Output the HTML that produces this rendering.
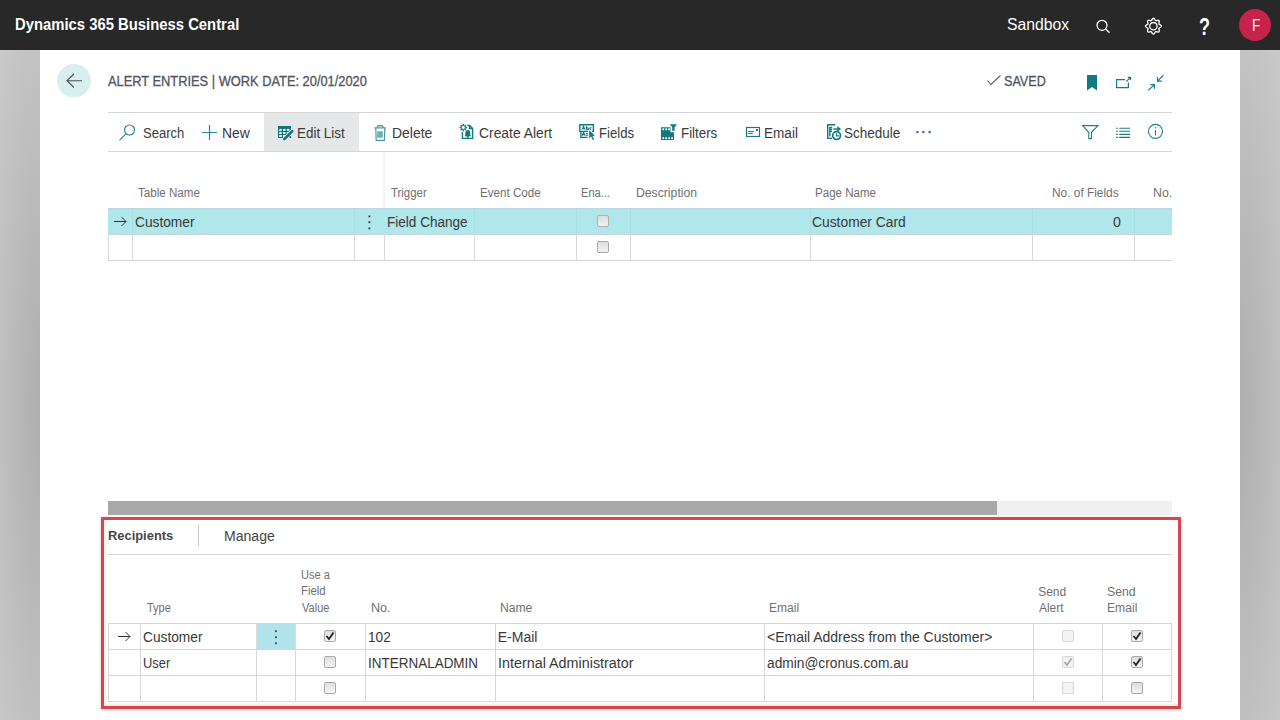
<!DOCTYPE html>
<html><head><meta charset="utf-8">
<style>
*{box-sizing:border-box;margin:0;padding:0}
html,body{width:1280px;height:720px;overflow:hidden;background:#fff;font-family:"Liberation Sans",sans-serif;color:#333}
#top{position:absolute;left:0;top:0;width:1280px;height:50px;background:#282828}
#lband{position:absolute;left:0;top:50px;width:40px;height:670px;background:radial-gradient(ellipse 120px 935px at 100% 360px,#aeaeae 0%,#e4e4e4 100%)}
#rband{position:absolute;left:1240px;top:50px;width:40px;height:670px;background:radial-gradient(ellipse 120px 935px at 0% 360px,#aeaeae 0%,#e4e4e4 100%)}
.t{position:absolute;white-space:nowrap;line-height:1;transform-origin:0 0}
.hl{position:absolute;height:1px;background:#d6d6d6}
.vl{position:absolute;width:1px;background:#d9d9d9}
.act{font-size:14px;color:#363636}
.hdr{font-size:12px;color:#6b6b6b}
.cell{font-size:14px;color:#262626}
svg{position:absolute;overflow:visible}
.cb{position:absolute;width:12px;height:12px;border:1px solid #a9a9a9;border-radius:2px;background:linear-gradient(#dedede,#f4f4f4)}
.cbd{position:absolute;width:12px;height:12px;border:1px solid #d6d6d6;border-radius:2px;background:#f4f4f4}
</style></head><body>
<!-- top bar -->
<div id="top"></div>
<svg style="left:0;top:0" width="1280" height="50">
  <circle cx="1102" cy="25.3" r="5" fill="none" stroke="#fff" stroke-width="1.3"/>
  <line x1="1105.6" y1="28.9" x2="1109.5" y2="32.8" stroke="#fff" stroke-width="1.4"/>
  <circle cx="1153.4" cy="26.2" r="3.7" fill="none" stroke="#fff" stroke-width="1.3"/>
  <circle cx="1205" cy="24.5" r="0" fill="#fff"/>
  <circle cx="1255" cy="25" r="16" fill="#c5234a"/>
</svg>
<div class="t" style="left:1198.5px;top:14.5px;font-size:24px;font-weight:bold;color:#fff;transform:scaleX(0.75)">?</div>
<div class="t" style="left:1251.5px;top:17.5px;font-size:16px;color:#fff;transform:scaleX(0.85)">F</div>

<div id="lband"></div><div id="rband"></div>

<!-- header -->
<svg style="left:0;top:0" width="1280" height="110">
  <circle cx="74" cy="80.7" r="16.8" fill="#d9eeee"/>
</svg>

<!-- action bar -->
<div class="hl" style="left:108px;top:112px;width:1064px"></div>
<div class="hl" style="left:108px;top:151px;width:1064px"></div>
<div style="position:absolute;left:264px;top:113px;width:95px;height:38px;background:#e6e7e8"></div>

<!-- main grid -->

<div style="position:absolute;left:108px;top:208px;width:1064px;height:27px;background:#afe7ea;border-top:1px solid #bcd9e2;border-bottom:1px solid #c3d6db"></div>
<div class="vl" style="left:132px;top:209px;height:25px;background:#a8dde2"></div><div class="vl" style="left:354px;top:209px;height:25px;background:#a8dde2"></div><div class="vl" style="left:474px;top:209px;height:25px;background:#a8dde2"></div><div class="vl" style="left:576px;top:209px;height:25px;background:#a8dde2"></div><div class="vl" style="left:630px;top:209px;height:25px;background:#a8dde2"></div><div class="vl" style="left:810px;top:209px;height:25px;background:#a8dde2"></div><div class="vl" style="left:1032px;top:209px;height:25px;background:#a8dde2"></div><div class="vl" style="left:1134px;top:209px;height:25px;background:#a8dde2"></div>
<div class="hl" style="left:108px;top:260px;width:1064px"></div>
<div class="vl" style="left:108px;top:234px;height:26px"></div>
<div class="vl" style="left:132px;top:234px;height:26px"></div>
<div class="vl" style="left:354px;top:234px;height:26px"></div>
<div class="vl" style="left:382px;top:152px;height:56px;width:3px;background:linear-gradient(to right,#fdfdfd,#f1f1f1)"></div>
<div class="vl" style="left:384px;top:234px;height:26px"></div>
<div class="vl" style="left:474px;top:234px;height:26px"></div>
<div class="vl" style="left:576px;top:234px;height:26px"></div>
<div class="vl" style="left:630px;top:234px;height:26px"></div>
<div class="vl" style="left:810px;top:234px;height:26px"></div>
<div class="vl" style="left:1032px;top:234px;height:26px"></div>
<div class="vl" style="left:1134px;top:234px;height:26px"></div>

<div class="cbd" style="left:597px;top:215px;border-color:#b0b0b0;background:linear-gradient(#dcdcdc,#f2f2f2)"></div>
<div class="cb" style="left:597px;top:241px"></div>

<!-- scrollbar -->
<div style="position:absolute;left:108px;top:501px;width:1064px;height:14px;background:#f0f0f0"></div>
<div style="position:absolute;left:108px;top:501px;width:889px;height:14px;background:#a8a8a8"></div>

<!-- recipients -->
<div style="position:absolute;left:101px;top:517px;width:1080px;height:192px;border:3px solid #d6474d;box-shadow:0 1px 3px rgba(150,60,60,0.3),inset 2px -2px 2px rgba(0,0,0,0.07)"></div>
<div class="vl" style="left:198px;top:524px;height:22px;background:#c8c8c8"></div>
<div class="hl" style="left:108px;top:554px;width:1064px"></div>



<!-- recipients grid -->
<div style="position:absolute;left:256px;top:623px;width:39px;height:26px;background:#b1e4ea"></div>
<div class="hl" style="left:108px;top:623px;width:1064px"></div>
<div class="hl" style="left:108px;top:649px;width:1064px"></div>
<div class="hl" style="left:108px;top:675px;width:1064px"></div>
<div class="hl" style="left:108px;top:701px;width:1064px"></div>
<div class="vl" style="left:108px;top:623px;height:79px"></div>
<div class="vl" style="left:140px;top:623px;height:79px"></div>
<div class="vl" style="left:256px;top:623px;height:79px"></div>
<div class="vl" style="left:295px;top:623px;height:79px"></div>
<div class="vl" style="left:365px;top:623px;height:79px"></div>
<div class="vl" style="left:495px;top:623px;height:79px"></div>
<div class="vl" style="left:764px;top:623px;height:79px"></div>
<div class="vl" style="left:1033px;top:623px;height:79px"></div>
<div class="vl" style="left:1102px;top:623px;height:79px"></div>
<div class="vl" style="left:1171px;top:623px;height:79px"></div>


<div class="cb" style="left:324px;top:630px"></div>
<div class="cb" style="left:324px;top:656px"></div>
<div class="cb" style="left:324px;top:682px"></div>
<div class="cbd" style="left:1062px;top:630px"></div>
<div class="cbd" style="left:1062px;top:656px"></div>
<div class="cbd" style="left:1062px;top:682px"></div>
<div class="cb" style="left:1131px;top:630px"></div>
<div class="cb" style="left:1131px;top:656px"></div>
<div class="cb" style="left:1131px;top:682px"></div>

<!-- texts -->
<div class="t" style="left:14.57px;top:17.00px;font-size:16px;font-weight:bold;color:#fff;transform:scaleX(0.9271)">Dynamics 365 Business Central</div>
<div class="t" style="left:1007.42px;top:17.00px;font-size:16px;font-weight:normal;color:#fff;transform:scaleX(0.9839)">Sandbox</div>
<div class="t" style="left:108.30px;top:74.00px;font-size:14px;font-weight:normal;color:#51565d;transform:scaleX(0.9174);-webkit-text-stroke:0.3px #51565d">ALERT ENTRIES | WORK DATE: 20/01/2020</div>
<div class="t" style="left:1003.60px;top:73.60px;font-size:14px;font-weight:normal;color:#51565d;transform:scaleX(0.9000);-webkit-text-stroke:0.3px #51565d">SAVED</div>
<div class="t" style="left:142.77px;top:126.00px;font-size:14px;font-weight:normal;color:#3a3a3a;transform:scaleX(0.9302)">Search</div>
<div class="t" style="left:222.01px;top:126.00px;font-size:14px;font-weight:normal;color:#3a3a3a;transform:scaleX(0.9926)">New</div>
<div class="t" style="left:296.74px;top:126.00px;font-size:14px;font-weight:normal;color:#3a3a3a;transform:scaleX(0.9592)">Edit List</div>
<div class="t" style="left:391.90px;top:126.00px;font-size:14px;font-weight:normal;color:#3a3a3a;transform:scaleX(0.9974)">Delete</div>
<div class="t" style="left:478.61px;top:126.00px;font-size:14px;font-weight:normal;color:#3a3a3a;transform:scaleX(0.9904)">Create Alert</div>
<div class="t" style="left:599.16px;top:126.00px;font-size:14px;font-weight:normal;color:#3a3a3a;transform:scaleX(0.9389)">Fields</div>
<div class="t" style="left:681.15px;top:126.00px;font-size:14px;font-weight:normal;color:#3a3a3a;transform:scaleX(0.9514)">Filters</div>
<div class="t" style="left:764.03px;top:126.00px;font-size:14px;font-weight:normal;color:#3a3a3a;transform:scaleX(0.9697)">Email</div>
<div class="t" style="left:844.24px;top:126.00px;font-size:14px;font-weight:normal;color:#3a3a3a;transform:scaleX(0.9632)">Schedule</div>
<div class="t" style="left:138.20px;top:186.90px;font-size:12px;font-weight:normal;color:#707070;transform:scaleX(0.9656)">Table Name</div>
<div class="t" style="left:390.50px;top:186.90px;font-size:12px;font-weight:normal;color:#707070;transform:scaleX(0.9500)">Trigger</div>
<div class="t" style="left:479.63px;top:186.90px;font-size:12px;font-weight:normal;color:#707070;transform:scaleX(0.9689)">Event Code</div>
<div class="t" style="left:581.47px;top:186.90px;font-size:12px;font-weight:normal;color:#707070;transform:scaleX(0.9276)">Ena...</div>
<div class="t" style="left:635.58px;top:186.90px;font-size:12px;font-weight:normal;color:#707070;transform:scaleX(1.0172)">Description</div>
<div class="t" style="left:815.44px;top:186.90px;font-size:12px;font-weight:normal;color:#707070;transform:scaleX(0.9629)">Page Name</div>
<div class="t" style="left:1051.61px;top:186.90px;font-size:12px;font-weight:normal;color:#707070;transform:scaleX(0.9894)">No. of Fields</div>
<div class="t" style="left:1152.57px;top:186.90px;font-size:12px;font-weight:normal;color:#707070;transform:scaleX(1.0294)">No.</div>
<div class="t" style="left:134.62px;top:214.90px;font-size:14px;font-weight:normal;color:#383838;transform:scaleX(0.9800)">Customer</div>
<div class="t" style="left:386.73px;top:214.90px;font-size:14px;font-weight:normal;color:#383838;transform:scaleX(0.9683)">Field Change</div>
<div class="t" style="left:812.31px;top:214.90px;font-size:14px;font-weight:normal;color:#383838;transform:scaleX(0.9882)">Customer Card</div>
<div class="t" style="left:1112.80px;top:214.90px;font-size:14px;font-weight:normal;color:#383838;transform:scaleX(1.0143)">0</div>
<div class="t" style="left:107.51px;top:529.00px;font-size:13px;font-weight:bold;color:#474747;transform:scaleX(0.9922)">Recipients</div>
<div class="t" style="left:224.40px;top:529.00px;font-size:14px;font-weight:normal;color:#444;transform:scaleX(1.0041)">Manage</div>
<div class="t" style="left:146.50px;top:601.80px;font-size:12px;font-weight:normal;color:#707070;transform:scaleX(0.9154)">Type</div>
<div class="t" style="left:300.88px;top:569.00px;font-size:12px;font-weight:normal;color:#707070;transform:scaleX(0.9200)">Use a</div>
<div class="t" style="left:300.85px;top:585.40px;font-size:12px;font-weight:normal;color:#707070;transform:scaleX(0.9458)">Field</div>
<div class="t" style="left:301.80px;top:601.80px;font-size:12px;font-weight:normal;color:#707070;transform:scaleX(0.9200)">Value</div>
<div class="t" style="left:370.55px;top:601.80px;font-size:12px;font-weight:normal;color:#707070;transform:scaleX(1.0471)">No.</div>
<div class="t" style="left:500.24px;top:601.80px;font-size:12px;font-weight:normal;color:#707070;transform:scaleX(1.0081)">Name</div>
<div class="t" style="left:769.30px;top:601.80px;font-size:12px;font-weight:normal;color:#707070;transform:scaleX(1.0036)">Email</div>
<div class="t" style="left:1038.20px;top:586.00px;font-size:12px;font-weight:normal;color:#707070;transform:scaleX(1.0000)">Send</div>
<div class="t" style="left:1039.20px;top:601.60px;font-size:12px;font-weight:normal;color:#707070;transform:scaleX(0.9920)">Alert</div>
<div class="t" style="left:1106.98px;top:586.00px;font-size:12px;font-weight:normal;color:#707070;transform:scaleX(1.0192)">Send</div>
<div class="t" style="left:1106.99px;top:601.60px;font-size:12px;font-weight:normal;color:#707070;transform:scaleX(1.0107)">Email</div>
<div class="t" style="left:142.62px;top:630.20px;font-size:14px;font-weight:normal;color:#383838;transform:scaleX(0.9800)">Customer</div>
<div class="t" style="left:367.63px;top:630.20px;font-size:14px;font-weight:normal;color:#383838;transform:scaleX(0.9727)">102</div>
<div class="t" style="left:497.75px;top:630.20px;font-size:14px;font-weight:normal;color:#383838;transform:scaleX(1.0000)">E-Mail</div>
<div class="t" style="left:767.40px;top:630.20px;font-size:14px;font-weight:normal;color:#383838;transform:scaleX(0.9987)">&lt;Email Address from the Customer&gt;</div>
<div class="t" style="left:142.68px;top:656.20px;font-size:14px;font-weight:normal;color:#383838;transform:scaleX(0.9207)">User</div>
<div class="t" style="left:367.64px;top:656.20px;font-size:14px;font-weight:normal;color:#383838;transform:scaleX(0.9625)">INTERNALADMIN</div>
<div class="t" style="left:497.73px;top:656.20px;font-size:14px;font-weight:normal;color:#383838;transform:scaleX(1.0248)">Internal Administrator</div>
<div class="t" style="left:766.52px;top:656.20px;font-size:14px;font-weight:normal;color:#383838;transform:scaleX(0.9811)">admin@cronus.com.au</div>
<!-- icons -->
<svg style="left:0;top:0" width="1280" height="720" viewBox="0 0 1280 720">
  <!-- top gear -->
  <g transform="translate(1153.4,26.2)"><path d="M7.85,0.00 L7.80,0.31 L7.64,0.60 L7.41,0.88 L7.11,1.13 L6.77,1.35 L6.42,1.54 L6.10,1.72 L5.83,1.89 L5.63,2.08 L5.50,2.28 L5.45,2.51 L5.46,2.78 L5.53,3.10 L5.63,3.45 L5.74,3.83 L5.82,4.23 L5.86,4.62 L5.83,4.98 L5.73,5.30 L5.55,5.55 L5.30,5.73 L4.98,5.83 L4.62,5.86 L4.23,5.82 L3.83,5.74 L3.45,5.63 L3.10,5.53 L2.78,5.46 L2.51,5.45 L2.28,5.50 L2.08,5.63 L1.89,5.83 L1.72,6.10 L1.54,6.42 L1.35,6.77 L1.13,7.11 L0.88,7.41 L0.60,7.64 L0.31,7.80 L0.00,7.85 L-0.31,7.80 L-0.60,7.64 L-0.88,7.41 L-1.13,7.11 L-1.35,6.77 L-1.54,6.42 L-1.72,6.10 L-1.89,5.83 L-2.08,5.63 L-2.28,5.50 L-2.51,5.45 L-2.78,5.46 L-3.10,5.53 L-3.45,5.63 L-3.83,5.74 L-4.23,5.82 L-4.62,5.86 L-4.98,5.83 L-5.30,5.73 L-5.55,5.55 L-5.73,5.30 L-5.83,4.98 L-5.86,4.62 L-5.82,4.23 L-5.74,3.83 L-5.63,3.45 L-5.53,3.10 L-5.46,2.78 L-5.45,2.51 L-5.50,2.28 L-5.63,2.08 L-5.83,1.89 L-6.10,1.72 L-6.42,1.54 L-6.77,1.35 L-7.11,1.13 L-7.41,0.88 L-7.64,0.60 L-7.80,0.31 L-7.85,0.00 L-7.80,-0.31 L-7.64,-0.60 L-7.41,-0.88 L-7.11,-1.13 L-6.77,-1.35 L-6.42,-1.54 L-6.10,-1.72 L-5.83,-1.89 L-5.63,-2.08 L-5.50,-2.28 L-5.45,-2.51 L-5.46,-2.78 L-5.53,-3.10 L-5.63,-3.45 L-5.74,-3.83 L-5.82,-4.23 L-5.86,-4.62 L-5.83,-4.98 L-5.73,-5.30 L-5.55,-5.55 L-5.30,-5.73 L-4.98,-5.83 L-4.62,-5.86 L-4.23,-5.82 L-3.83,-5.74 L-3.45,-5.63 L-3.10,-5.53 L-2.78,-5.46 L-2.51,-5.45 L-2.28,-5.50 L-2.08,-5.63 L-1.89,-5.83 L-1.72,-6.10 L-1.54,-6.42 L-1.35,-6.77 L-1.13,-7.11 L-0.88,-7.41 L-0.60,-7.64 L-0.31,-7.80 L-0.00,-7.85 L0.31,-7.80 L0.60,-7.64 L0.88,-7.41 L1.13,-7.11 L1.35,-6.77 L1.54,-6.42 L1.72,-6.10 L1.89,-5.83 L2.08,-5.63 L2.28,-5.50 L2.51,-5.45 L2.78,-5.46 L3.10,-5.53 L3.45,-5.63 L3.83,-5.74 L4.23,-5.82 L4.62,-5.86 L4.98,-5.83 L5.30,-5.73 L5.55,-5.55 L5.73,-5.30 L5.83,-4.98 L5.86,-4.62 L5.82,-4.23 L5.74,-3.83 L5.63,-3.45 L5.53,-3.10 L5.46,-2.78 L5.45,-2.51 L5.50,-2.28 L5.63,-2.08 L5.83,-1.89 L6.10,-1.72 L6.42,-1.54 L6.77,-1.35 L7.11,-1.13 L7.41,-0.88 L7.64,-0.60 L7.80,-0.31Z" fill="none" stroke="#fff" stroke-width="1.3" stroke-linejoin="round"/></g>
  <!-- back arrow -->
  <path d="M73.9,74 L67,80.7 L73.9,87.5 M67,80.7 H82" fill="none" stroke="#46525a" stroke-width="1.1"/>
  <!-- saved check -->
  <path d="M987.5,80.5 L991,84.5 L1000.5,75.5" fill="none" stroke="#5b6168" stroke-width="1.1"/>
  <!-- bookmark -->
  <path d="M1087,75 H1097 V90.5 L1092,87 L1087,90.5 Z" fill="#0f7b80"/>
  <!-- popout -->
  <path d="M1125,79.6 H1116.6 V87.6 H1128.4 V82.4" fill="none" stroke="#1b7a80" stroke-width="1.2"/>
  <path d="M1126.2,81.6 L1130.4,77.4 M1127.8,77.4 H1130.4 V80" fill="none" stroke="#1b7a80" stroke-width="1.2"/>
  <!-- collapse -->
  <path d="M1163.4,75.2 L1157.5,81.1 M1157.5,77 V81.1 H1161.8" fill="none" stroke="#1b7a80" stroke-width="1.2"/>
  <path d="M1148.3,90.4 L1154.4,84.6 M1150.3,84.6 H1154.4 V88.8" fill="none" stroke="#1b7a80" stroke-width="1.2"/>

  <!-- action: search -->
  <circle cx="129.5" cy="130" r="5" fill="none" stroke="#2a8a93" stroke-width="1.2"/>
  <path d="M125.8,133.8 L119.5,140.3" stroke="#2a8a93" stroke-width="1.2"/>
  <!-- plus -->
  <path d="M202,132.5 H217 M209.5,125 V140" stroke="#2a8a93" stroke-width="1.2"/>
  <!-- edit list -->
  <rect x="278" y="126" width="13" height="12" fill="#0f747b"/>
  <g fill="#d4f4f6">
    <rect x="279.2" y="128.9" width="2.6" height="2"/><rect x="283" y="128.9" width="2.6" height="2"/><rect x="286.8" y="128.9" width="2.6" height="2"/>
    <rect x="279.2" y="132" width="2.6" height="2"/><rect x="283" y="132" width="2.6" height="2"/><rect x="286.8" y="132" width="2.6" height="2"/>
    <rect x="279.2" y="135" width="2.6" height="2"/><rect x="283" y="135" width="2.6" height="2"/><rect x="286.8" y="135" width="2.6" height="2"/>
  </g>
  <path d="M283.5,140.5 L293.5,130.5" stroke="#e6e7e8" stroke-width="5"/>
  <path d="M286,138 L293.5,130.5" stroke="#e6e7e8" stroke-width="5"/>
  <path d="M284.3,139.2 L292.3,131.2" stroke="#0f747b" stroke-width="2.6" stroke-linecap="round"/>
  <rect x="289.5" y="136" width="1.6" height="2" fill="#0f747b"/>
  <!-- delete -->
  <path d="M374.3,127.8 H385.9 M377,127.8 L378.3,125.6 H382.3 L383.6,127.8 M375.8,127.8 L376.2,140.3 H384.4 L384.8,127.8" fill="none" stroke="#4a9aa2" stroke-width="1.2"/>
  <rect x="378.6" y="125.9" width="3.4" height="1.9" fill="#8fc7cc"/>
  <rect x="377.2" y="131.2" width="5.6" height="6.5" fill="#6db0b6"/>
  <!-- create alert -->
  <g stroke="#0f7b80" stroke-width="1.4" fill="none">
    <path d="M463.3,123.8 V131.2 M459.6,127.5 H467 M460.7,124.9 L465.9,130.1 M465.9,124.9 L460.7,130.1"/>
    <path d="M467.3,125.5 H469.6 L472.6,128.5 V138.4 H462.4 V132"/>
    <path d="M469.6,125.5 V128.5 H472.6"/>
  </g>
  <circle cx="463.3" cy="127.5" r="1.9" fill="#fff"/>
  <circle cx="463.3" cy="127.5" r="1.9" fill="none" stroke="#0f7b80" stroke-width="0.8"/>
  <path d="M464.6,136.3 Q465.4,135 465.4,132.6 Q465.4,130 467.8,130 Q470.2,130 470.2,132.6 Q470.2,135 471,136.3 Z" fill="#0f7b80"/>
  <circle cx="467.8" cy="136.8" r="1.1" fill="#0f7b80"/>
  <!-- fields -->
  <g stroke="#0f7b80" stroke-width="1.4" fill="none">
    <path d="M588,131.4 H579.8 V124.7 H593.4 V131.4 H592"/>
    <path d="M580.9,131.4 V137.4 H587.6"/>
  </g>
  <path d="M582,129.6 L583.5,126.2 L585,129.6 M582.6,128.4 H584.4 M586.4,129.6 V126 M586.4,128 Q588.6,127.6 588.6,128.8 Q588.6,129.8 586.4,129.6 M591.6,127.8 H590 Q589.6,129.6 591.2,129.6" stroke="#0f7b80" stroke-width="1.1" fill="none"/>
  <path d="M582,135.8 L583.6,132.4 L585.2,135.8 M582.6,134.6 H584.6 M586.2,133.6 H587.8 M586.2,135.4 H587.8" stroke="#0f7b80" stroke-width="1.1" fill="none"/>
  <path d="M589.2,130.2 L595,135.6 L592.4,135.9 L594.3,139.4 L592.9,140.1 L591.1,136.6 L589.2,138.6 Z" fill="#0f7b80"/>
  <!-- filters -->
  <path d="M661,127.2 H670.5 V132.2 H674 V140 H661 Z" fill="#0f7b80"/>
  <g fill="#fff">
    <rect x="662.3" y="128.4" width="1.8" height="1.8"/><rect x="665.3" y="128.4" width="1.8" height="1.8"/><rect x="668.2" y="128.4" width="1.8" height="1.8"/>
    <rect x="662.3" y="137.3" width="1.8" height="1.8"/><rect x="665.3" y="137.3" width="1.8" height="1.8"/><rect x="668.2" y="137.3" width="1.8" height="1.8"/><rect x="671.2" y="137.3" width="1.8" height="1.8"/>
  </g>
  <path d="M669.8,124.2 H677 L674.6,127.3 V130.8 H672.2 V127.3 Z" fill="#0f7b80"/>
  <!-- email -->
  <rect x="746.5" y="127.5" width="13" height="9" fill="none" stroke="#1a7a80" stroke-width="1.2"/>
  <path d="M748.2,131.5 H753.9 M748.2,133.5 H752.8" stroke="#1a7a80" stroke-width="1"/>
  <rect x="756" y="129.1" width="1.9" height="1.8" fill="#0b5e60"/>
  <!-- schedule -->
  <g stroke="#0f7b80" stroke-width="1.4" fill="none">
    <path d="M835.2,124.8 H827.7 V138.4 H832"/>
    <path d="M829.8,126.8 V136.6 M829.8,127.4 H832.2 M829.8,129.3 H832.2 M829.8,131.2 H832"/>
    <path d="M833.2,129 H839.6"/>
  </g>
  <path d="M837.3,126 L841,129 L837.3,132 Z" fill="#0f7b80"/>
  <circle cx="836.6" cy="135.6" r="3.9" fill="#fff" stroke="#0f7b80" stroke-width="1.7"/>
  <path d="M836.6,133.3 V135.9 H838.8" stroke="#0f7b80" stroke-width="1.1" fill="none"/>
  <!-- ellipsis -->
  <g fill="#3d6a96"><rect x="916.3" y="131" width="2.2" height="2.2"/><rect x="922.2" y="131" width="2.2" height="2.2"/><rect x="928.5" y="131" width="2.2" height="2.2"/></g>
  <!-- right icons -->
  <path d="M1082.5,125.6 H1098 L1091.5,132.3 V138.6 H1088.8 V132.3 Z" fill="none" stroke="#1a7f87" stroke-width="1.1" stroke-linejoin="miter"/>
  <g stroke="#1a7f87" stroke-width="1.1">
    <path d="M1116,128.3 H1117.8 M1116,131.3 H1117.8 M1116,134.4 H1117.8 M1116,137.4 H1117.8"/>
    <path d="M1119.2,128.3 H1130 M1119.2,131.3 H1130 M1119.2,134.4 H1130 M1119.2,137.4 H1130"/>
  </g>
  <circle cx="1155.5" cy="131.4" r="7" fill="none" stroke="#1a7f87" stroke-width="1.1"/>
  <path d="M1155.5,130 V135.5" stroke="#1a7f87" stroke-width="1.1"/>
  <circle cx="1155.5" cy="127.8" r="0.7" fill="#1a7f87"/>

  <!-- grid arrows & dots -->
  <path d="M114,221.5 H126 M121.5,217 L126,221.5 L121.5,226" fill="none" stroke="#2a3438" stroke-width="1"/>
  <g fill="#333"><rect x="368.5" y="215.5" width="1.8" height="1.8"/><rect x="368.5" y="221.3" width="1.8" height="1.8"/><rect x="368.5" y="227.5" width="1.8" height="1.8"/></g>
  <path d="M118,636.5 H130 M125.5,632 L130,636.5 L125.5,641" fill="none" stroke="#333" stroke-width="1"/>
  <g fill="#1d4c66"><rect x="275" y="630.3" width="1.8" height="1.8"/><rect x="275" y="636.3" width="1.8" height="1.8"/><rect x="275" y="642.3" width="1.8" height="1.8"/></g>
  <!-- checkmarks -->
  <path d="M326.5,636 L329,639 L333.5,632.5" fill="none" stroke="#222" stroke-width="1.8"/>
  <path d="M1133.5,636 L1136,639 L1140.5,632.5" fill="none" stroke="#222" stroke-width="1.8"/>
  <path d="M1133.5,662 L1136,665 L1140.5,658.5" fill="none" stroke="#222" stroke-width="1.8"/>
  <path d="M1064.5,662 L1067,665 L1071.5,658.5" fill="none" stroke="#a8a8a8" stroke-width="1.8"/>
</svg>
</body></html>
